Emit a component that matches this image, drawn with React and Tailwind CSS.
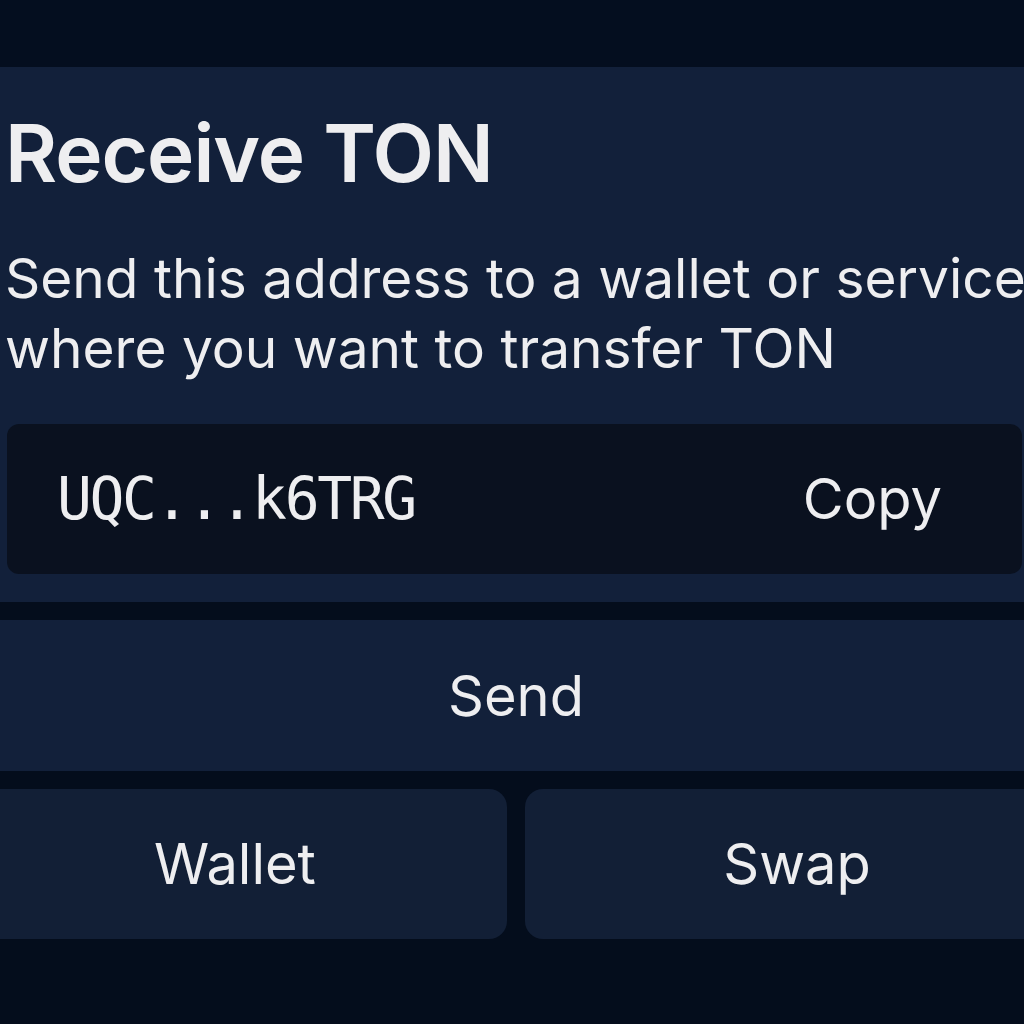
export default function App() {
  return (
    <div className="min-h-screen w-full overflow-hidden bg-[#040d1c]" style={{ fontFamily: "Inter, 'Noto Sans', sans-serif" }}>
      <div className="h-[67px] bg-[#040e1f]" />
      <div className="ml-[-37px] w-[1106px]">
        <div className="bg-[#12203a] pt-[46px] pb-[28px] pl-[44px] pr-[47px]">
          <h1 className="ml-[-2px] text-[80px] leading-[80px] font-semibold tracking-[-1px] text-[#eeeef0]">Receive TON</h1>
          <p className="mt-[50px] ml-[-2px] text-[55px] leading-[70px] font-normal text-[#eeeef0] whitespace-nowrap">
            Send this address to a wallet or service
            <br />
            where you want to transfer TON
          </p>
          <div className="mt-[41px] flex h-[150px] items-center justify-between rounded-[12px] bg-[#0a111f] pl-[50px] pr-[80px]">
            <span className="text-[58px] tracking-[-2.4px] text-[#eeeef0]" style={{ fontFamily: "'DejaVu Sans Mono', 'Liberation Mono', monospace" }}>
              UQC...k6TRG
            </span>
            <span className="text-[56px] text-[#eeeef0]">Copy</span>
          </div>
        </div>
        <button className="mt-[18px] flex h-[151px] w-full items-center justify-center bg-[#12203a] text-[56px] text-[#eeeef0]">
          Send
        </button>
        <div className="mt-[18px] grid grid-cols-2 gap-[18px]">
          <button className="flex h-[150px] items-center justify-center rounded-[18px] bg-[#121f36] text-[56px] text-[#eeeef0]">
            Wallet
          </button>
          <button className="flex h-[150px] items-center justify-center rounded-[18px] bg-[#121f36] text-[56px] text-[#eeeef0]">
            Swap
          </button>
        </div>
      </div>
    </div>
  );
}
